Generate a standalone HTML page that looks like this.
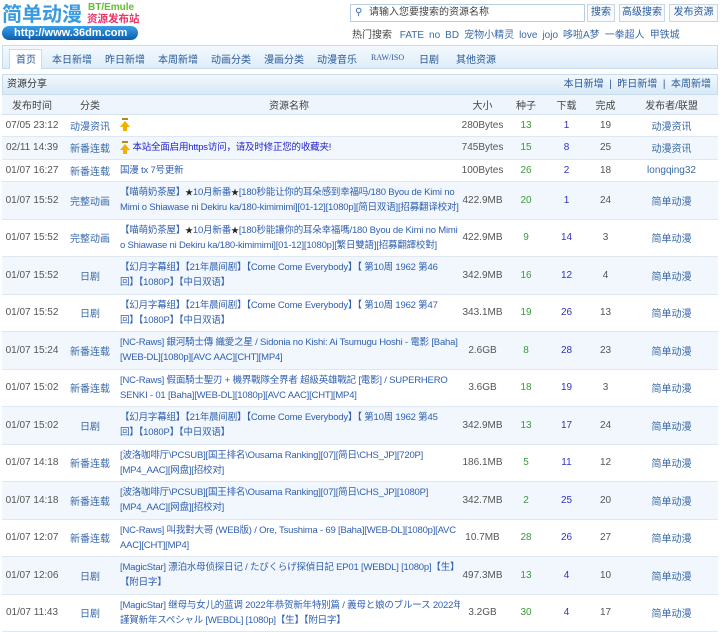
<!DOCTYPE html>
<html><head><meta charset="utf-8"><style>
*{margin:0;padding:0;box-sizing:border-box}
body{width:720px;height:629px;overflow:hidden;background:#fff;font-family:"Liberation Sans","Noto Sans CJK SC",sans-serif;font-size:10px;color:#555;position:relative}
.a{position:absolute;white-space:nowrap}
.logo{left:2px;top:0;font-size:20px;font-weight:bold;color:#3a9be0;line-height:26px;font-family:"Noto Sans CJK SC",sans-serif}
.bt{left:88px;top:2px;font-size:10px;font-weight:bold;color:#66bb33}
.zy{left:87px;top:13px;font-size:10.5px;font-weight:bold;color:#ee3366;line-height:12px}
.url{left:2px;top:26px;width:136px;height:14px;border-radius:7px;background:linear-gradient(#3aa0e8,#0b5fae);color:#fff;font-weight:bold;font-size:11px;line-height:14px;padding-left:12px}
.search{left:350px;top:4px;width:235px;height:18px;border:1px solid #b9cde0;color:#444;line-height:16px;padding-left:18px}
.btn{top:4px;height:18px;border:1px solid #c9d6e3;background:#f7f9fb;color:#2a5a99;line-height:16px;text-align:center}
.hot{left:352px;top:26px;color:#444}
.hot span{color:#3a6aa8;margin-left:5px}
.nav{left:2px;top:45px;width:716px;height:24px;border:1px solid #c8dcee;background:linear-gradient(#f3f9fe,#dfedf9)}
.nav span{position:absolute;top:5px;color:#2a5a99;font-size:10px}
.act{position:absolute;left:6px;top:3px;width:33px;height:20px;background:#fff;border:1px solid #c8dcee;border-bottom:none}
.bar{left:2px;top:74px;width:716px;height:21px;border:1px solid #c8dcee;background:linear-gradient(#f2f8fd,#d7e9f7);line-height:19px;padding-left:4px;color:#333}
.bar b{font-weight:normal;position:absolute;right:6px;color:#2a5a99}
table{position:absolute;left:2px;top:95px;width:716px;border-collapse:collapse;table-layout:fixed}
td,th{font-weight:normal;text-align:center;border-bottom:1px solid #dde8f2;font-size:10px;padding:0;overflow:hidden;white-space:nowrap}
th{height:19px;background:#eef5fc;color:#444;border-bottom:1px solid #d5e3f0}
tr.s td{height:22.5px}
tr.t td{height:37.5px}
tr:nth-child(odd) td{background:#f1f7fd}
td.n{text-align:left;padding-left:2px;color:#2f5fb0;line-height:15px;font-size:9.5px;letter-spacing:-0.2px}
td.c,td.p{color:#3a6aa8}
td.g{color:#3b9a3b}
td.b{color:#3333bb}
td.tm{color:#555}
.k{color:#222;font-size:8px}
.up{display:inline-block;width:10px;height:14px;vertical-align:middle;position:relative}
.up:before{content:"";position:absolute;left:2px;top:0;width:6px;height:2px;background:#b08a20}
.up:after{content:"";position:absolute;left:0;top:3px;border-left:5px solid transparent;border-right:5px solid transparent;border-bottom:6px solid #f0b000}
.up i{position:absolute;left:3px;top:8px;width:4px;height:5px;background:#f0b000}
</style></head><body>
<div class="a logo">简单动漫</div>
<div class="a bt">BT/Emule</div>
<div class="a zy">资源发布站</div>
<div class="a url">http://www.36dm.com</div>
<div class="a search"><span style="position:absolute;left:4px;top:0;color:#3a6aa8">⚲</span>请输入您要搜索的资源名称</div>
<div class="a btn" style="left:587px;width:28px">搜索</div>
<div class="a btn" style="left:619px;width:46px">高级搜索</div>
<div class="a btn" style="left:669px;width:49px">发布资源</div>
<div class="a hot">热门搜索 <span>FATE</span><span>no</span><span>BD</span><span>宠物小精灵</span><span>love</span><span>jojo</span><span>哆啦A梦</span><span>一拳超人</span><span>甲铁城</span></div>
<div class="a nav"><div class="act"></div>
<span style="left:13px">首页</span><span style="left:49px">本日新增</span><span style="left:102px">昨日新增</span><span style="left:155px">本周新增</span><span style="left:208px">动画分类</span><span style="left:261px">漫画分类</span><span style="left:314px">动漫音乐</span><span style="left:368px;font-family:'Liberation Serif',serif;font-size:8px;top:7px">RAW/ISO</span><span style="left:416px">日剧</span><span style="left:453px">其他资源</span></div>
<div class="a bar">资源分享<b>本日新增 &nbsp;|&nbsp; 昨日新增 &nbsp;|&nbsp; 本周新增</b></div>
<table>
<colgroup><col style="width:60px"><col style="width:56px"><col style="width:342px"><col style="width:45px"><col style="width:42px"><col style="width:39px"><col style="width:39px"><col style="width:93px"></colgroup>
<tr><th>发布时间</th><th>分类</th><th>资源名称</th><th>大小</th><th>种子</th><th>下载</th><th>完成</th><th>发布者/联盟</th></tr>
<tr class="s"><td class="tm">07/05 23:12</td><td class="c">动漫资讯</td><td class="n"><span class="up"><i></i></span></td><td>280Bytes</td><td class="g">13</td><td class="b">1</td><td>19</td><td class="p">动漫资讯</td></tr>
<tr class="s"><td class="tm">02/11 14:39</td><td class="c">新番连载</td><td class="n"><span class="up"><i></i></span> <span style="color:#2222cc">本站全面启用https访问，请及时修正您的收藏夹!</span></td><td>745Bytes</td><td class="g">15</td><td class="b">8</td><td>25</td><td class="p">动漫资讯</td></tr>
<tr class="s"><td class="tm">01/07 16:27</td><td class="c">新番连载</td><td class="n">国漫 tx 7号更新</td><td>100Bytes</td><td class="g">26</td><td class="b">2</td><td>18</td><td class="p">longqing32</td></tr>
<tr class="t"><td class="tm">01/07 15:52</td><td class="c">完整动画</td><td class="n">【喵萌奶茶屋】<span class="k">★</span>10月新番<span class="k">★</span>[180秒能让你的耳朵感到幸福吗/180 Byou de Kimi no<br>Mimi o Shiawase ni Dekiru ka/180-kimimimi][01-12][1080p][简日双语][招募翻译校对]</td><td>422.9MB</td><td class="g">20</td><td class="b">1</td><td>24</td><td class="p">简单动漫</td></tr>
<tr class="t"><td class="tm">01/07 15:52</td><td class="c">完整动画</td><td class="n">【喵萌奶茶屋】<span class="k">★</span>10月新番<span class="k">★</span>[180秒能讓你的耳朵幸福嗎/180 Byou de Kimi no Mimi<br>o Shiawase ni Dekiru ka/180-kimimimi][01-12][1080p][繁日雙語][招募翻譯校對]</td><td>422.9MB</td><td class="g">9</td><td class="b">14</td><td>3</td><td class="p">简单动漫</td></tr>
<tr class="t"><td class="tm">01/07 15:52</td><td class="c">日剧</td><td class="n">【幻月字幕组】【21年晨间剧】【Come Come Everybody】【 第10周 1962 第46<br>回】【1080P】【中日双语】</td><td>342.9MB</td><td class="g">16</td><td class="b">12</td><td>4</td><td class="p">简单动漫</td></tr>
<tr class="t"><td class="tm">01/07 15:52</td><td class="c">日剧</td><td class="n">【幻月字幕组】【21年晨间剧】【Come Come Everybody】【 第10周 1962 第47<br>回】【1080P】【中日双语】</td><td>343.1MB</td><td class="g">19</td><td class="b">26</td><td>13</td><td class="p">简单动漫</td></tr>
<tr class="t"><td class="tm">01/07 15:24</td><td class="c">新番连载</td><td class="n">[NC-Raws] 銀河騎士傳 織愛之星 / Sidonia no Kishi: Ai Tsumugu Hoshi - 電影 [Baha]<br>[WEB-DL][1080p][AVC AAC][CHT][MP4]</td><td>2.6GB</td><td class="g">8</td><td class="b">28</td><td>23</td><td class="p">简单动漫</td></tr>
<tr class="t"><td class="tm">01/07 15:02</td><td class="c">新番连载</td><td class="n">[NC-Raws] 假面騎士聖刃 + 機界戰隊全界者 超級英雄戰記 [電影] / SUPERHERO<br>SENKI - 01 [Baha][WEB-DL][1080p][AVC AAC][CHT][MP4]</td><td>3.6GB</td><td class="g">18</td><td class="b">19</td><td>3</td><td class="p">简单动漫</td></tr>
<tr class="t"><td class="tm">01/07 15:02</td><td class="c">日剧</td><td class="n">【幻月字幕组】【21年晨间剧】【Come Come Everybody】【 第10周 1962 第45<br>回】【1080P】【中日双语】</td><td>342.9MB</td><td class="g">13</td><td class="b">17</td><td>24</td><td class="p">简单动漫</td></tr>
<tr class="t"><td class="tm">01/07 14:18</td><td class="c">新番连载</td><td class="n">[波洛咖啡厅\PCSUB][国王排名\Ousama Ranking][07][简日\CHS_JP][720P]<br>[MP4_AAC][网盘][招校对]</td><td>186.1MB</td><td class="g">5</td><td class="b">11</td><td>12</td><td class="p">简单动漫</td></tr>
<tr class="t"><td class="tm">01/07 14:18</td><td class="c">新番连载</td><td class="n">[波洛咖啡厅\PCSUB][国王排名\Ousama Ranking][07][简日\CHS_JP][1080P]<br>[MP4_AAC][网盘][招校对]</td><td>342.7MB</td><td class="g">2</td><td class="b">25</td><td>20</td><td class="p">简单动漫</td></tr>
<tr class="t"><td class="tm">01/07 12:07</td><td class="c">新番连载</td><td class="n">[NC-Raws] 叫我對大哥 (WEB版) / Ore, Tsushima - 69 [Baha][WEB-DL][1080p][AVC<br>AAC][CHT][MP4]</td><td>10.7MB</td><td class="g">28</td><td class="b">26</td><td>27</td><td class="p">简单动漫</td></tr>
<tr class="t"><td class="tm">01/07 12:06</td><td class="c">日剧</td><td class="n">[MagicStar] 漂泊水母侦探日记 / たびくらげ探偵日記 EP01 [WEBDL] [1080p]【生】<br>【附日字】</td><td>497.3MB</td><td class="g">13</td><td class="b">4</td><td>10</td><td class="p">简单动漫</td></tr>
<tr class="t"><td class="tm">01/07 11:43</td><td class="c">日剧</td><td class="n">[MagicStar] 继母与女儿的蓝调 2022年恭贺新年特别篇 / 義母と娘のブルース 2022年<br>謹賀新年スペシャル [WEBDL] [1080p]【生】【附日字】</td><td>3.2GB</td><td class="g">30</td><td class="b">4</td><td>17</td><td class="p">简单动漫</td></tr>
</table>
</body></html>
